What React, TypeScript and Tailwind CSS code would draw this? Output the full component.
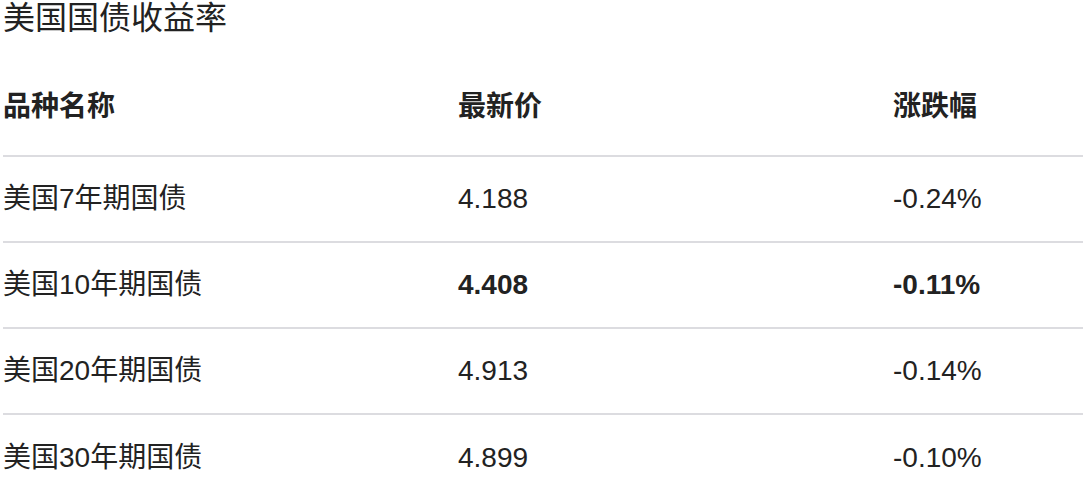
const rows = [
  { name: '美国7年期国债', price: '4.188', change: '-0.24%', bold: false },
  { name: '美国10年期国债', price: '4.408', change: '-0.11%', bold: true },
  { name: '美国20年期国债', price: '4.913', change: '-0.14%', bold: false },
  { name: '美国30年期国债', price: '4.899', change: '-0.10%', bold: false },
];

export default function App() {
  return (
    <div
      className="h-[499px] w-[1084px] overflow-hidden bg-white text-[#222222]"
      style={{ fontFamily: '"Liberation Sans", "Noto Sans CJK SC", Arial, sans-serif' }}
    >
      <div className="h-[36px] pl-[3px] text-[32px] leading-[36px]">美国国债收益率</div>
      <div className="ml-[3px] mt-[23px] w-[1080px]">
        <div className="flex h-[98px] items-center border-b-2 border-[#dcdce0] text-[28px] font-bold">
          <div className="w-[455px]">品种名称</div>
          <div className="w-[435px]">最新价</div>
          <div className="flex-1">涨跌幅</div>
        </div>
        {rows.map((r, i) => (
          <div
            key={r.name}
            className={`flex h-[86px] items-center text-[28px] ${
              i < rows.length - 1 ? 'border-b-2 border-[#dcdce0]' : ''
            }`}
          >
            <div className="w-[455px]">{r.name}</div>
            <div className={`w-[435px] ${r.bold ? 'font-bold' : ''}`}>{r.price}</div>
            <div className={`flex-1 ${r.bold ? 'font-bold' : ''}`}>{r.change}</div>
          </div>
        ))}
      </div>
    </div>
  );
}
